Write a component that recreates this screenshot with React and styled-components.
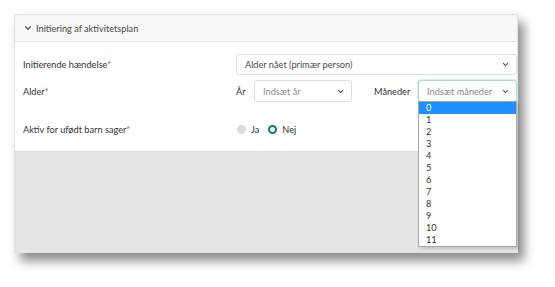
import React from "react";
import styled, { createGlobalStyle } from "styled-components";

const Global = createGlobalStyle`
  html, body { margin: 0; padding: 0; background: #ffffff; }
  body { font-family: "Lato", "Open Sans", sans-serif; color: #3a3a3a; }
`;

const Page = styled.div`
  width: 555px;
  height: 287px;
  padding: 14px 0 0 14px;
  box-sizing: border-box;
`;

const Panel = styled.div`
  width: 504px;
  border: 1px solid #e2e2e2;
  box-sizing: border-box;
  background: #fff;
  box-shadow: 6px 8px 10px rgba(0, 0, 0, 0.45);
`;

const Header = styled.div`
  height: 26px;
  display: flex;
  align-items: center;
  gap: 4px;
  padding-left: 9px;
  background: #f7f7f7;
  border-bottom: 1px solid #e3e3e3;
  font-size: 9.2px;
  color: #4a4a4a;
`;

const Body = styled.div`
  padding: 12px 0 14px 8px;
  display: flex;
  flex-direction: column;
`;

const Row = styled.div`
  display: flex;
  align-items: center;
  height: ${(p) => p.$h}px;
  margin-top: ${(p) => p.$mt || 0}px;
`;

const Label = styled.div`
  width: 213px;
  flex: none;
  font-size: 9.2px;
  color: #333;
`;

const Req = styled.span`
  color: #dc3545;
`;

const SelectBox = styled.div`
  position: relative;
  box-sizing: border-box;
  flex: none;
  width: ${(p) => p.$w}px;
  height: ${(p) => p.$h || 22}px;
  border: 1px solid ${(p) => (p.$focus ? "#a9dcd3" : "#dedede")};
  box-shadow: ${(p) => (p.$focus ? "0 0 0 1px #d9efeb" : "none")};
  border-radius: 3px;
  display: flex;
  align-items: center;
  justify-content: space-between;
  padding: 0 7px 0 8px;
  font-size: 9.2px;
  color: ${(p) => (p.$placeholder ? "#8a8a8a" : "#4a4a4a")};
  background: #fff;
`;

const SubLabel = styled.div`
  flex: none;
  width: ${(p) => p.$w}px;
  font-size: 9.2px;
  color: #333;
`;

const Controls = styled.div`
  display: flex;
  align-items: center;
`;

const Spacer = styled.div`
  flex: none;
  width: ${(p) => p.$w}px;
`;

const RadioGroup = styled.div`
  display: flex;
  align-items: center;
  padding-left: 1px;
  font-size: 9.2px;
  color: #333;
`;

const Radio = styled.span`
  width: 9px;
  height: 9px;
  border-radius: 50%;
  box-sizing: border-box;
  background: ${(p) => (p.$on ? "#fff" : "#dcdcdc")};
  border: ${(p) => (p.$on ? "2.6px solid #00806a" : "none")};
  margin-right: 5px;
`;

const RadioText = styled.span`
  margin-right: ${(p) => p.$mr || 0}px;
`;

const Footer = styled.div`
  height: 100px;
  background: #e4e4e4;
  border-top: 1px solid #e0e0e0;
`;

const List = styled.div`
  position: absolute;
  top: 100%;
  left: -1px;
  width: 99px;
  box-sizing: border-box;
  border: 1px solid #a8a8a8;
  background: #fff;
  z-index: 5;
  box-shadow: 2px 2px 3px rgba(0,0,0,0.15);
`;

const Item = styled.div`
  height: 12px;
  line-height: 12px;
  padding-left: 7px;
  font-size: 9.2px;
  color: ${(p) => (p.$active ? "#fff" : "#333")};
  background: ${(p) => (p.$active ? "#1e90ff" : "transparent")};
`;

const Chevron = ({ size = 7, color = "#555" }) => (
  <svg width={size} height={size} viewBox="0 0 10 10">
    <path d="M2 3.5 L5 6.5 L8 3.5" fill="none" stroke={color} strokeWidth="1.6" strokeLinecap="round" strokeLinejoin="round" />
  </svg>
);

export default function App() {
  const months = Array.from({ length: 12 }, (_, i) => i);
  return (
    <Page>
      <Global />
      <Panel>
        <Header>
          <Chevron size={8} color="#555" />
          <span>Initiering af aktivitetsplan</span>
        </Header>
        <Body>
          <Row $h={21}>
            <Label>
              Initierende hændelse<Req>*</Req>
            </Label>
            <SelectBox $w={281} $h={21}>
              <span>Alder nået (primær person)</span>
              <Chevron />
            </SelectBox>
          </Row>
          <Row $h={22} $mt={5}>
            <Label>
              Alder<Req>*</Req>
            </Label>
            <Controls>
              <SubLabel $w={18}>År</SubLabel>
              <SelectBox $w={98} $placeholder>
                <span>Indsæt år</span>
                <Chevron />
              </SelectBox>
              <Spacer $w={22} />
              <SubLabel $w={44}>Måneder</SubLabel>
              <SelectBox $w={99} $placeholder $focus>
                <span>Indsæt måneder</span>
                <Chevron />
                <List>
                  {months.map((m) => (
                    <Item key={m} $active={m === 0}>
                      {m}
                    </Item>
                  ))}
                </List>
              </SelectBox>
            </Controls>
          </Row>
          <Row $h={16} $mt={19}>
            <Label>
              Aktiv for ufødt barn sager<Req>*</Req>
            </Label>
            <RadioGroup>
              <Radio />
              <RadioText $mr={9}>Ja</RadioText>
              <Radio $on />
              <RadioText>Nej</RadioText>
            </RadioGroup>
          </Row>
        </Body>
        <Footer />
      </Panel>
    </Page>
  );
}
